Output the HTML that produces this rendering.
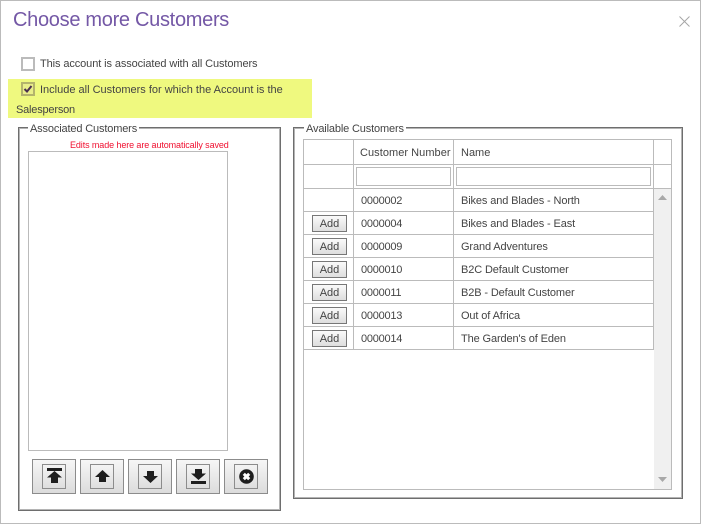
<!DOCTYPE html>
<html><head><meta charset="utf-8">
<style>
html,body{margin:0;padding:0;background:#fff}
#p{position:relative;width:701px;height:524px;overflow:hidden;background:#fff;font-family:"Liberation Sans",sans-serif;font-size:11px;color:#444}
#p div,#p svg{position:absolute;box-sizing:border-box}
.t{white-space:nowrap;line-height:14px}
.h{background:#bbb}
.r{letter-spacing:-.12px}
.n{letter-spacing:-.25px}
.btn{width:44px;height:35px;top:459px;border:1px solid #8c8c8c;background:linear-gradient(#f6f6f6,#dcdcdc)}
.in{left:9px;top:4px;width:24px;height:25px;border:1px solid #8c8c8c;background:linear-gradient(#f4f4f4,#dedede)}
.add{left:312px;width:35px;height:17px;border:1px solid #777;background:linear-gradient(#fafafa,#dedede);text-align:center;line-height:16px;font-size:11px;color:#444}
.fs{border:1px solid #6e6e6e;box-shadow:inset 0 0 0 1px #b4b4b4}
</style></head><body>
<div id="p">
<div style="left:0;top:0;width:701px;height:524px;border:1px solid #bbb"></div>
<div class="t" style="left:13px;top:8px;font-size:20px;line-height:24px;color:#7458a6;letter-spacing:-.3px">Choose more Customers</div>
<svg style="left:679px;top:16px" width="11" height="11" viewBox="0 0 11 11"><path d="M.5 .5L10.500 10.500M10.500 .5L.5 10.500" stroke="#a6a6a6" stroke-width="1" fill="none"/></svg>

<div style="left:21px;top:57px;width:14px;height:14px;border:2px solid #bbb"></div>
<div class="t" style="left:40px;top:57px;letter-spacing:-.1px">This account is associated with all Customers</div>

<div style="left:8px;top:79px;width:304px;height:39px;background:#eff97f"></div>
<div style="left:21px;top:82px;width:14px;height:14px;border:2px solid #b3b36c;background:#e9ee8a"></div>
<svg style="left:23px;top:84px" width="10" height="10" viewBox="0 0 10 10"><path d="M1.500 5L4 7.500L8.500 2" stroke="#4a2f4f" stroke-width="2" fill="none"/></svg>
<div class="t" style="left:40px;top:83px">Include all Customers for which the Account is the</div>
<div class="t" style="left:16px;top:103px;letter-spacing:-.2px">Salesperson</div>

<!-- left fieldset -->
<div class="fs" style="left:18px;top:127px;width:263px;height:384px"></div>
<div class="t" style="left:28px;top:122px;background:#fff;padding:0 2px;letter-spacing:-.15px">Associated Customers</div>
<div class="t" style="left:70px;top:138px;font-size:9px;color:#f01030;letter-spacing:-.1px">Edits made here are automatically saved</div>
<div style="left:28px;top:151px;width:200px;height:300px;border:1px solid #bbb"></div>

<div class="btn" style="left:32px"><div class="in"><svg style="left:4px;top:3px" width="15" height="15" viewBox="0 0 15 15"><path d="M0 0H15V3H0ZM7.500 3L15 9.500H11V15H4V9.500H0Z" fill="#1e1e1e"/></svg></div></div>
<div class="btn" style="left:80px"><div class="in"><svg style="left:4px;top:5px" width="15" height="12" viewBox="0 0 15 12"><path d="M7.500 0L15 7H11V12H4V7H0Z" fill="#1e1e1e"/></svg></div></div>
<div class="btn" style="left:128px"><div class="in"><svg style="left:4px;top:6px" width="15" height="12" viewBox="0 0 15 12"><path d="M7.500 12L15 5H11V0H4V5H0Z" fill="#1e1e1e"/></svg></div></div>
<div class="btn" style="left:176px"><div class="in"><svg style="left:4px;top:4px" width="15" height="15" viewBox="0 0 15 15"><path d="M7.500 11L15 4.500H11V0H4V4.500H0ZM0 12H15V15H0Z" fill="#1e1e1e"/></svg></div></div>
<div class="btn" style="left:224px"><div class="in"><svg style="left:4px;top:4px" width="15" height="15" viewBox="0 0 15 15"><circle cx="7.500" cy="7.500" r="7.300" fill="#1e1e1e"/><path d="M4.800 4.800L10.200 10.200M10.200 4.800L4.800 10.200" stroke="#fff" stroke-width="3"/></svg></div></div>

<!-- right fieldset -->
<div class="fs" style="left:293px;top:127px;width:390px;height:372px"></div>
<div class="t" style="left:304px;top:122px;background:#fff;padding:0 2px;letter-spacing:-.15px">Available Customers</div>

<div style="left:303px;top:139px;width:369px;height:351px;border:1px solid #bbb"></div>
<div style="left:654px;top:189px;width:17px;height:300px;background:#f0f0f0"></div>
<svg style="left:658px;top:195px" width="9" height="6" viewBox="0 0 9 6"><path d="M4.500 0L9 5H0Z" fill="#a8a8a8"/></svg>
<svg style="left:658px;top:477px" width="9" height="6" viewBox="0 0 9 6"><path d="M0 0H9L4.500 5Z" fill="#a8a8a8"/></svg>

<div class="h" style="left:303px;top:164px;width:369px;height:1px"></div>
<div class="h" style="left:303px;top:188px;width:369px;height:1px"></div>
<div class="h" style="left:303px;top:211px;width:351px;height:1px"></div>
<div class="h" style="left:303px;top:234px;width:351px;height:1px"></div>
<div class="h" style="left:303px;top:257px;width:351px;height:1px"></div>
<div class="h" style="left:303px;top:280px;width:351px;height:1px"></div>
<div class="h" style="left:303px;top:303px;width:351px;height:1px"></div>
<div class="h" style="left:303px;top:326px;width:351px;height:1px"></div>
<div class="h" style="left:303px;top:349px;width:351px;height:1px"></div>
<div class="h" style="left:353px;top:139px;width:1px;height:211px"></div>
<div class="h" style="left:453px;top:139px;width:1px;height:211px"></div>
<div class="h" style="left:653px;top:139px;width:1px;height:211px"></div>

<div class="t" style="left:360px;top:146px;letter-spacing:.05px">Customer Number</div>
<div class="t" style="left:461px;top:146px">Name</div>
<div style="left:356px;top:167px;width:95px;height:19px;border:1px solid #bbb"></div>
<div style="left:456px;top:167px;width:195px;height:19px;border:1px solid #bbb"></div>

<div class="t n" style="left:361px;top:194px">0000002</div><div class="t r" style="left:461px;top:194px">Bikes and Blades - North</div>
<div class="add" style="top:215px">Add</div><div class="t n" style="left:361px;top:217px">0000004</div><div class="t r" style="left:461px;top:217px">Bikes and Blades - East</div>
<div class="add" style="top:238px">Add</div><div class="t n" style="left:361px;top:240px">0000009</div><div class="t r" style="left:461px;top:240px">Grand Adventures</div>
<div class="add" style="top:261px">Add</div><div class="t n" style="left:361px;top:263px">0000010</div><div class="t r" style="left:461px;top:263px">B2C Default Customer</div>
<div class="add" style="top:284px">Add</div><div class="t n" style="left:361px;top:286px">0000011</div><div class="t r" style="left:461px;top:286px">B2B - Default Customer</div>
<div class="add" style="top:307px">Add</div><div class="t n" style="left:361px;top:309px">0000013</div><div class="t r" style="left:461px;top:309px">Out of Africa</div>
<div class="add" style="top:330px">Add</div><div class="t n" style="left:361px;top:332px">0000014</div><div class="t r" style="left:461px;top:332px">The Garden's of Eden</div>
</div>
</body></html>
